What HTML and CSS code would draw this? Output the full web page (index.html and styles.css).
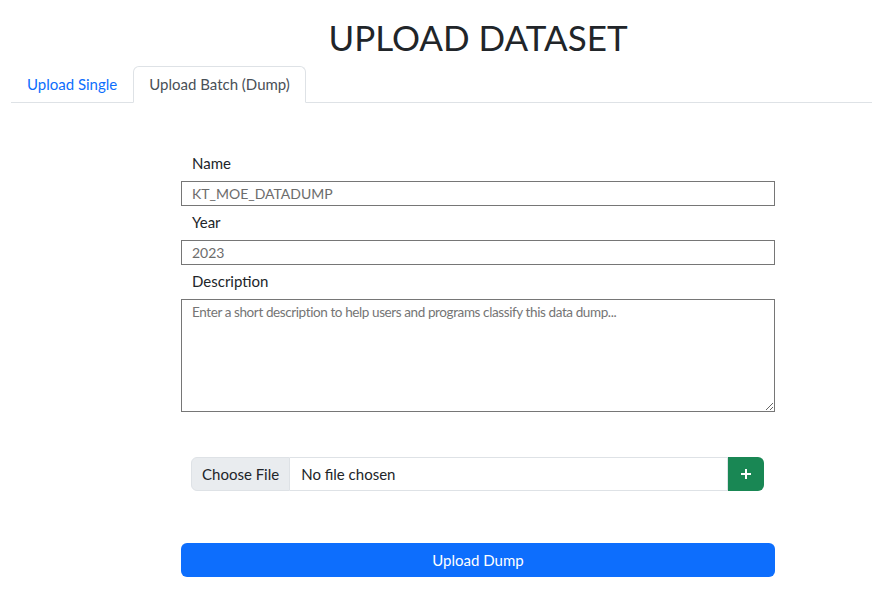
FILE: index.html
```html
<!DOCTYPE html>
<html lang="en">
<head>
<meta charset="utf-8">
<title>Upload Dataset</title>
<link rel="stylesheet" href="styles.css">
</head>
<body>
<div class="page">
  <h1 class="title">UPLOAD DATASET</h1>
  <ul class="tabs">
    <li class="tab"><a class="tab-link" href="#">Upload Single</a></li>
    <li class="tab"><a class="tab-link active" href="#">Upload Batch (Dump)</a></li>
  </ul>
  <form class="form">
    <label class="label" for="name">Name</label>
    <input class="field" id="name" type="text" value="KT_MOE_DATADUMP">
    <label class="label" for="year">Year</label>
    <input class="field" id="year" type="text" value="2023">
    <label class="label" for="desc">Description</label>
    <textarea class="field area" id="desc" placeholder="Enter a short description to help users and programs classify this data dump..."></textarea>
    <div class="file-group">
      <span class="file-btn">Choose File</span>
      <span class="file-name">No file chosen</span>
      <button class="add-btn" type="button" aria-label="Add">
        <svg width="12" height="12" viewBox="0 0 12 12"><path d="M6 1v10M1 6h10" stroke="#fff" stroke-width="2" fill="none"/></svg>
      </button>
    </div>
    <button class="submit" type="button">Upload Dump</button>
  </form>
</div>
</body>
</html>
```
FILE: styles.css
```css
* { box-sizing: border-box; }
body {
  margin: 0;
  font-family: Lato, "Noto Sans", sans-serif;
  color: #212529;
  background: #fff;
}
.page { padding-left: 11px; }
.title {
  margin: 16px 0 8px 170px;
  width: 594px;
  text-align: center;
  font-size: 35px;
  line-height: 42px;
  font-weight: 400;
  color: #212529;
}
.tabs {
  display: flex;
  list-style: none;
  margin: 0;
  padding: 0;
  border-bottom: 1px solid #dee2e6;
}
.tab { margin-bottom: -1px; }
.tab-link {
  display: block;
  padding: 6px 15px;
  font-size: 15px;
  line-height: 23px;
  color: #0d6efd;
  text-decoration: none;
  border: 1px solid transparent;
  border-radius: 6px 6px 0 0;
}
.tab-link.active {
  color: #495057;
  background: #fff;
  border-color: #dee2e6 #dee2e6 #fff;
}
.form {
  display: flex;
  flex-direction: column;
  margin-left: 170px;
  width: 594px;
  padding-top: 48px;
}
.label {
  padding-left: 11px;
  font-size: 15px;
  line-height: 24px;
  margin-bottom: 6px;
}
.field {
  height: 25px;
  margin: 0 0 4px;
  padding: 0 10px;
  border: 1px solid #767676;
  border-radius: 0;
  font-family: inherit;
  font-size: 14px;
  color: #6c6c6c;
}
.area {
  height: 113px;
  padding: 4px 10px;
  resize: vertical;
  margin-bottom: 0;
  font-size: 13.5px;
  letter-spacing: -0.4px;
}
.area::placeholder { color: #757575; }
.file-group {
  display: flex;
  margin: 45px 0 0 10px;
  width: 573px;
  height: 34px;
}
.file-btn {
  display: flex;
  align-items: center;
  padding: 0 10px;
  background: #e9ecef;
  border: 1px solid #dee2e6;
  border-radius: 6px 0 0 6px;
  font-size: 15px;
  color: #212529;
}
.file-name {
  flex: 1;
  display: flex;
  align-items: center;
  padding-left: 11px;
  border: 1px solid #dee2e6;
  border-left: 0;
  font-size: 15px;
  color: #212529;
}
.add-btn {
  width: 36px;
  display: flex;
  align-items: center;
  justify-content: center;
  background: #198754;
  border: 0;
  border-radius: 0 6px 6px 0;
  padding: 0;
}
.submit {
  margin-top: 52px;
  height: 34px;
  background: #0d6efd;
  color: #fff;
  border: 0;
  border-radius: 6px;
  font-family: inherit;
  font-size: 15px;
}
```
